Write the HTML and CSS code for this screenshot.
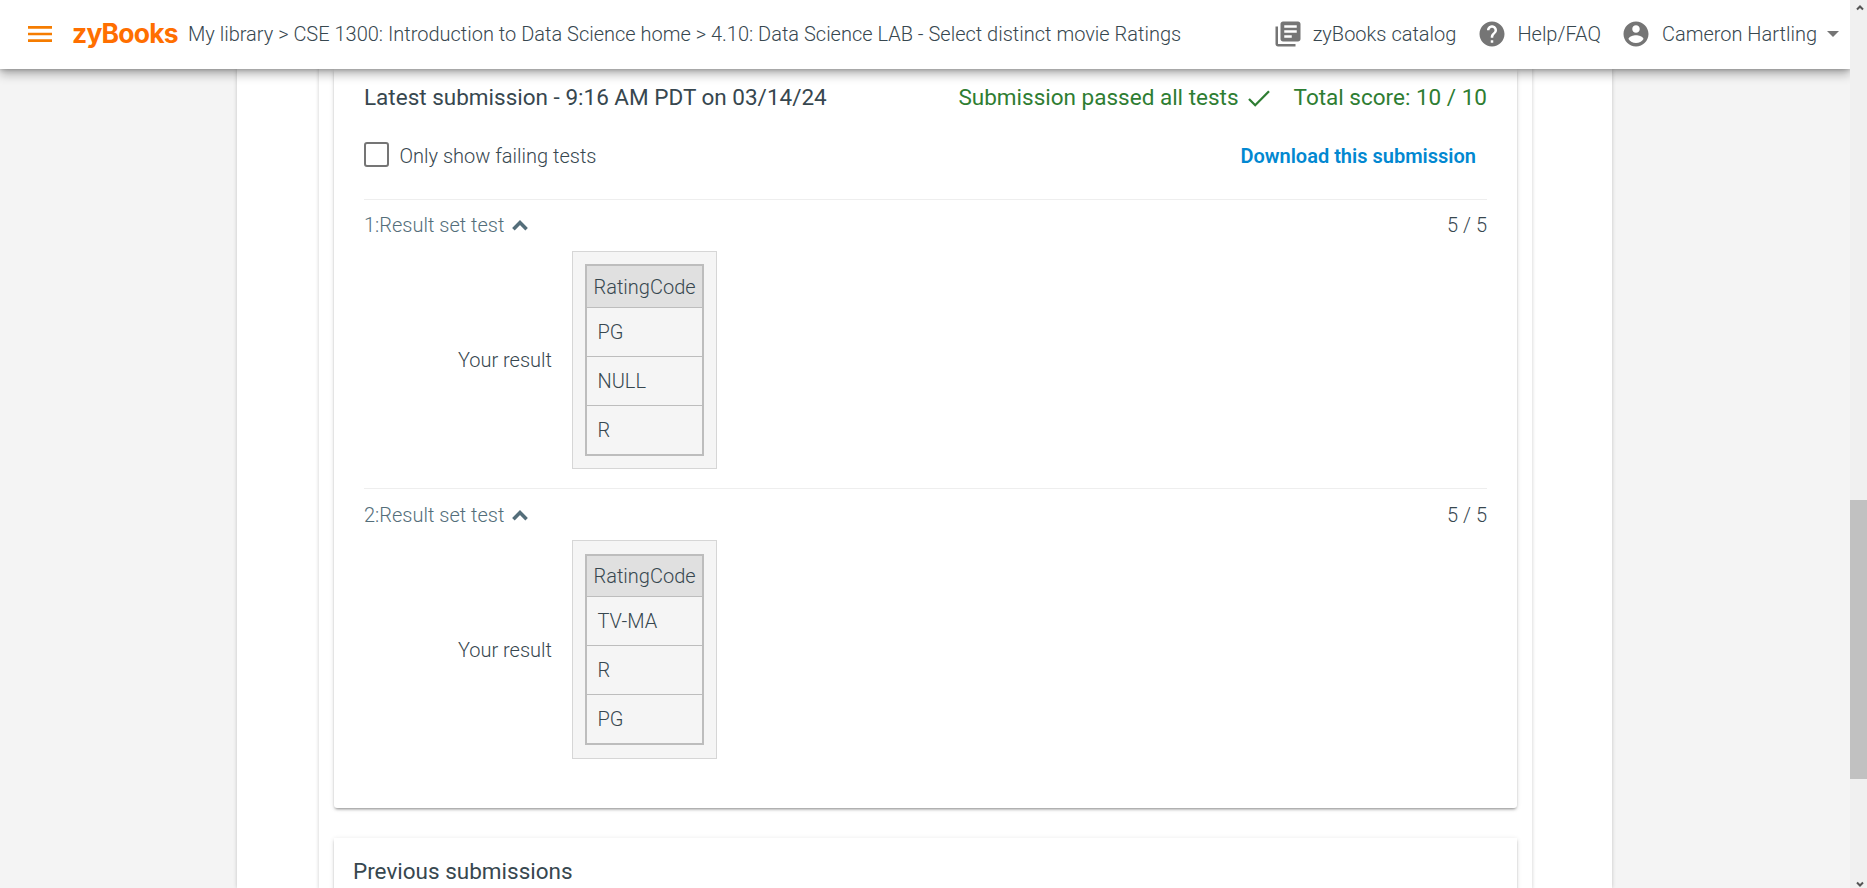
FILE: index.html
```html
<!DOCTYPE html>
<html lang="en">
<head>
<meta charset="utf-8">
<title>zyBooks</title>
<link rel="stylesheet" href="styles.css">
</head>
<body>
<div class="window">
  <div class="viewport">
    <header class="topbar">
      <svg class="menu" viewBox="0 0 24 16"><path d="M0 0h24v2.7H0zM0 6.65h24v2.7H0zM0 13.3h24V16H0z"/></svg>
      <span class="logo">zyBooks</span>
      <nav class="crumbs">My library &gt; CSE 1300: Introduction to Data Science home &gt; 4.10: Data Science LAB - Select distinct movie Ratings</nav>
      <div class="actions">
        <a class="action catalog"><svg class="icon" viewBox="0 0 24 24"><path d="M4 6H2v14c0 1.1.9 2 2 2h14v-2H4V6zm16-4H8c-1.100 0-2 .9-2 2v12c0 1.100.9 2 2 2h12c1.100 0 2-.9 2-2V4c0-1.100-.9-2-2-2zm-1 9H9V9h10v2zm-4 4H9v-2h6v2zm4-8H9V5h10v2z"/></svg><span>zyBooks catalog</span></a>
        <a class="action help"><svg class="icon" viewBox="0 0 24 24"><path d="M12 2C6.480 2 2 6.480 2 12s4.480 10 10 10 10-4.480 10-10S17.520 2 12 2zm1 17h-2v-2h2v2zm2.070-7.750l-.9.920C13.450 12.900 13 13.500 13 15h-2v-.5c0-1.100.450-2.100 1.170-2.830l1.240-1.260c.370-.360.590-.860.590-1.410 0-1.100-.9-2-2-2s-2 .9-2 2H8c0-2.210 1.790-4 4-4s4 1.790 4 4c0 .880-.360 1.680-.930 2.250z"/></svg><span>Help/FAQ</span></a>
        <a class="action user"><svg class="icon" viewBox="0 0 24 24"><path d="M12 2C6.480 2 2 6.480 2 12s4.480 10 10 10 10-4.480 10-10S17.520 2 12 2zm0 3c1.660 0 3 1.340 3 3s-1.340 3-3 3-3-1.340-3-3 1.340-3 3-3zm0 14.200c-2.500 0-4.710-1.280-6-3.220.030-1.990 4-3.080 6-3.080 1.990 0 5.970 1.090 6 3.080-1.290 1.940-3.500 3.220-6 3.220z"/></svg><span>Cameron Hartling</span><svg class="caret" viewBox="0 0 12 6"><path d="M0 0h12L6 6z"/></svg></a>
      </div>
    </header>
    <main class="page">
      <section class="activity">
        <article class="card latest">
          <div class="summary">
            <h2 class="title">Latest submission - 9:16 AM PDT on 03/14/24</h2>
            <div class="passed"><span>Submission passed all tests</span><svg class="check" viewBox="0 0 22 17"><path d="M1 9l6.200 6.200L21 1.300"/></svg></div>
            <div class="score">Total score: 10 / 10</div>
          </div>
          <div class="options">
            <label class="filter"><span class="box"></span><span>Only show failing tests</span></label>
            <a class="download">Download this submission</a>
          </div>
          <section class="test">
            <div class="test-head"><span class="test-name">1:Result set test<svg class="chevron" viewBox="0 0 16 11"><path d="M1.400 9.200L8 2.600l6.600 6.600"/></svg></span><span>5 / 5</span></div>
            <div class="result">
              <span class="result-label">Your result</span>
              <div class="output">
                <table class="rows"><thead><tr><th>RatingCode</th></tr></thead><tbody><tr><td>PG</td></tr><tr><td>NULL</td></tr><tr><td>R</td></tr></tbody></table>
              </div>
            </div>
          </section>
          <section class="test second">
            <div class="test-head"><span class="test-name">2:Result set test<svg class="chevron" viewBox="0 0 16 11"><path d="M1.400 9.200L8 2.600l6.600 6.600"/></svg></span><span>5 / 5</span></div>
            <div class="result">
              <span class="result-label">Your result</span>
              <div class="output">
                <table class="rows"><thead><tr><th>RatingCode</th></tr></thead><tbody><tr><td>TV-MA</td></tr><tr><td>R</td></tr><tr><td>PG</td></tr></tbody></table>
              </div>
            </div>
          </section>
        </article>
        <article class="card previous"><h2 class="title">Previous submissions</h2></article>
      </section>
    </main>
  </div>
  <div class="scrollbar">
    <svg class="arrow" viewBox="0 0 8 7"><path d="M1 5.500L4 2.500l3 3"/></svg>
    <div class="thumb"></div>
    <svg class="arrow down" viewBox="0 0 8 7"><path d="M1 1.500l3 3 3-3"/></svg>
  </div>
</div>
</body>
</html>
```

FILE: styles.css
```css
* { box-sizing: border-box; }
body {
  margin: 0;
  overflow: hidden;
  font: 300 20px/30px Roboto, "Liberation Sans", sans-serif;
  color: #37474f;
}
svg { display: block; flex: none; }
h2 { margin: 0; }
.window { display: flex; width: 1867px; height: 888px; }
.viewport {
  display: flex;
  flex-direction: column;
  width: 1850px;
  height: 888px;
  overflow: hidden;
  background: #f4f4f4;
}
.topbar {
  position: relative;
  z-index: 1;
  flex: none;
  display: flex;
  align-items: center;
  height: 69px;
  padding: 0 11px 1px 28px;
  background: #fff;
  box-shadow: 0 0 5px rgba(0, 0, 0, .3), 0 5px 10px rgba(0, 0, 0, .3);
  white-space: nowrap;
}
.menu { width: 24px; height: 16px; fill: #f57c00; }
.logo {
  width: 115px;
  padding-left: 20px;
  margin-top: -2px;
  font: 700 26.5px/30px Inter, sans-serif;
  letter-spacing: -.8px;
  color: #ff6f00;
}
.crumbs { padding-left: 21px; }
.actions { display: flex; margin-left: auto; }
.action { display: flex; align-items: center; gap: 10px; margin-left: 20px; }
.help { margin-left: 21px; }
.user { gap: 11px; }
.user .caret { margin-left: -1px; }
.icon { width: 30px; height: 30px; fill: #757575; }
.caret { width: 12px; height: 6px; fill: #757575; }
.page {
  flex: 1;
  width: 1375px;
  margin-left: 237px;
  padding: 0 80px 0 82px;
  background: #fff;
  box-shadow: 0 0 4px rgba(0, 0, 0, .2);
}
.activity {
  height: 819px;
  padding: 0 15px;
  box-shadow: 0 0 3px 1px rgba(0, 0, 0, .13);
}
.card {
  background: #fff;
  border-radius: 0 0 3px 3px;
  box-shadow: 0 2px 3px -1px rgba(0, 0, 0, .4), 0 1px 5px rgba(0, 0, 0, .12);
}
.latest { height: 739px; padding: 13px 30px 0; }
.summary { display: flex; height: 30px; font-size: 22.5px; font-weight: 400; }
.title { font-size: 22.5px; line-height: 30px; font-weight: 400; }
.passed { display: flex; align-items: center; gap: 9px; margin-left: auto; color: #2e7d32; }
.check { width: 22px; height: 17px; margin-top: 2px; fill: none; stroke: #2e7d32; stroke-width: 2.3; }
.score { margin-left: 24px; color: #2e7d32; }
.options { display: flex; justify-content: space-between; height: 87px; padding: 29px 11px 0 0; }
.filter { display: flex; height: 30px; gap: 10.5px; }
.box { width: 25px; height: 25px; margin-top: 1px; border: 2px solid #757575; border-radius: 3px; }
.download { font-weight: 600; color: #0288d1; }
.test { height: 289px; border-top: 1px solid #eee; padding-top: 10px; }
.test-head { display: flex; justify-content: space-between; height: 30px; }
.test-name { display: flex; align-items: center; gap: 7.5px; color: #546e7a; }
.chevron { width: 16px; height: 11px; fill: none; stroke: #546e7a; stroke-width: 3.6; }
.result { display: flex; align-items: center; height: 218px; margin-top: 11px; }
.result-label { width: 208px; padding-right: 20px; text-align: right; }
.output { width: 145px; height: 218px; padding: 12px; border: 1px solid #d6d6d6; background: #f5f5f5; }
.rows { width: 119px; border-collapse: separate; border-spacing: 0; border: 2px solid #bdbdbd; }
.rows th { height: 41px; padding: 0 6px 0 6.5px; background: #e0e0e0; font-weight: 300; text-align: left; }
.rows td { height: 49px; padding: 0 10.5px; border-top: 1px solid #bdbdbd; }
.second { padding-top: 11px; }
.second .result { height: 219px; margin-top: 10px; }
.second .output { height: 219px; padding-top: 13px; }
.second .rows th { height: 40px; }
.previous { height: 60px; margin-top: 30px; padding: 18px 19px; }
.scrollbar {
  display: flex;
  flex-direction: column;
  align-items: center;
  width: 17px;
  height: 888px;
  padding-top: 4px;
  background: #f0f0f0;
}
.thumb { flex: none; width: 17px; height: 279px; margin-top: 489px; background: #c1c1c1; }
.arrow { width: 8px; height: 7px; margin-left: 2px; fill: none; stroke: #555; stroke-width: 2; }
.down { margin-top: 102px; }
```
